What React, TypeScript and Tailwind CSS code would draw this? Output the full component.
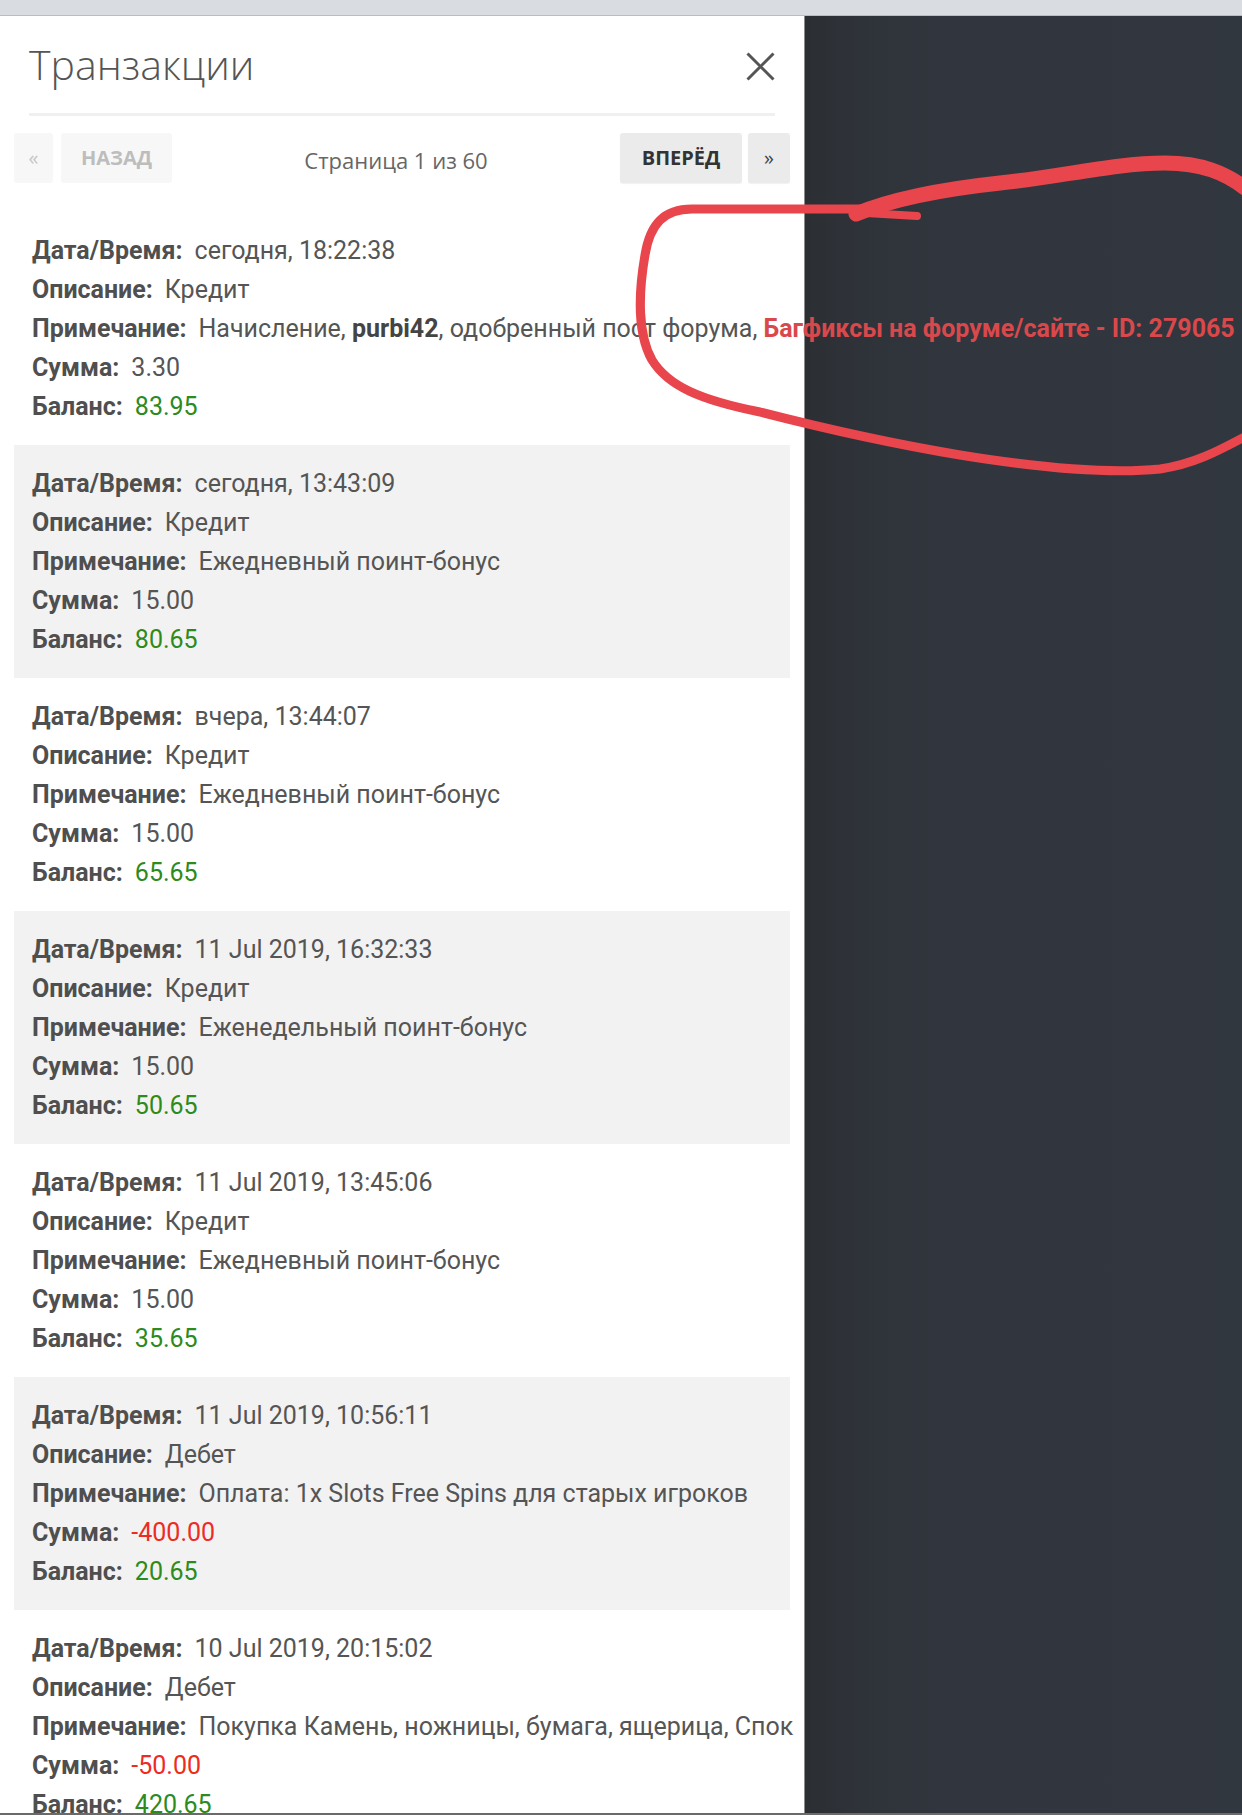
import React from "react";

type Tx = {
  date: string;
  desc: string;
  note: React.ReactNode;
  amount: string;
  balance: string;
};

const TXS: Tx[] = [
  {
    date: "сегодня, 18:22:38",
    desc: "Кредит",
    note: (
      <>
        Начисление, <b className="font-bold text-[#444]">purbi42</b>, одобренный пост форума,{" "}
        <b className="font-bold text-[#d9484b]">Багфиксы на форуме/сайте - ID: 279065</b>
      </>
    ),
    amount: "3.30",
    balance: "83.95",
  },
  { date: "сегодня, 13:43:09", desc: "Кредит", note: "Ежедневный поинт-бонус", amount: "15.00", balance: "80.65" },
  { date: "вчера, 13:44:07", desc: "Кредит", note: "Ежедневный поинт-бонус", amount: "15.00", balance: "65.65" },
  { date: "11 Jul 2019, 16:32:33", desc: "Кредит", note: "Еженедельный поинт-бонус", amount: "15.00", balance: "50.65" },
  { date: "11 Jul 2019, 13:45:06", desc: "Кредит", note: "Ежедневный поинт-бонус", amount: "15.00", balance: "35.65" },
  {
    date: "11 Jul 2019, 10:56:11",
    desc: "Дебет",
    note: "Оплата: 1x Slots Free Spins для старых игроков",
    amount: "-400.00",
    balance: "20.65",
  },
  {
    date: "10 Jul 2019, 20:15:02",
    desc: "Дебет",
    note: "Покупка Камень, ножницы, бумага, ящерица, Спок",
    amount: "-50.00",
    balance: "420.65",
  },
];

function Row({ label, children }: { label: string; children: React.ReactNode }) {
  return (
    <div className="whitespace-nowrap leading-[39px]">
      <span className="mr-[12px] font-bold text-[#4f4f4f]">{label}</span>
      {children}
    </div>
  );
}

export default function App() {
  return (
    <div className="relative flex h-[1815px] w-[1242px] flex-col overflow-hidden border-b-2 border-[#6a6a6a] bg-[#31363e] font-['Open_Sans','Liberation_Sans',sans-serif] text-[#555]">
      {/* top bar */}
      <div className="h-4 shrink-0 border-b border-[#b9bcc0] bg-[#d9dce1]" />

      <div className="flex min-h-0 flex-1">
        {/* side panel */}
        <aside className="relative z-10 w-[805px] shrink-0 border-r border-[#8c8c8c] bg-white px-[14px]">
          <div className="px-[15px]">
            <div className="flex items-center justify-between pt-[20px]">
              <h1 className="text-[41px] font-light leading-[56px] text-[#555]">Транзакции</h1>
              <svg width="29" height="29" viewBox="0 0 29 29" className="mt-1">
                <path d="M1.5 1.5 L27.5 27.5 M27.5 1.5 L1.5 27.5" stroke="#555" strokeWidth="3" />
              </svg>
            </div>
            <div className="mt-[21px] h-[3px] bg-[#f0f0f0]" />
          </div>

          {/* pager */}
          <div className="mt-[17px] flex h-[50px] items-stretch">
            <div className="flex w-[39px] items-center justify-center rounded-[3px] bg-[#f7f7f7] text-[20px] text-[#c6c6c6]">
              «
            </div>
            <div className="ml-2 flex w-[111px] items-center justify-center rounded-[3px] bg-[#f7f7f7] text-[20px] font-bold text-[#bdbdbd]">
              НАЗАД
            </div>
            <div className="flex flex-1 items-center justify-center pt-1 text-[22px] text-[#666]">Страница 1 из 60</div>
            <div className="flex w-[122px] items-center justify-center rounded-[3px] bg-[#ebebeb] text-[20px] font-bold text-[#333] shadow-[0_1px_1px_rgba(0,0,0,0.06)]">
              ВПЕРЁД
            </div>
            <div className="ml-[6px] flex w-[42px] items-center justify-center rounded-[3px] bg-[#ebebeb] text-[20px] text-[#444] shadow-[0_1px_1px_rgba(0,0,0,0.06)]">
              »
            </div>
          </div>

          {/* transactions */}
          <div className="mt-[29px] flex flex-col font-['Roboto','Liberation_Sans',sans-serif] text-[25px]">
            {TXS.map((tx, i) => (
              <div key={i} className={`px-[18px] py-[19px] ${i % 2 === 1 ? "bg-[#f2f2f2]" : ""}`}>
                <Row label="Дата/Время:">{tx.date}</Row>
                <Row label="Описание:">{tx.desc}</Row>
                <Row label="Примечание:">{tx.note}</Row>
                <Row label="Сумма:">
                  <span className={tx.amount.startsWith("-") ? "text-[#ee2a24]" : ""}>{tx.amount}</span>
                </Row>
                <Row label="Баланс:">
                  <span className="text-[#2d8a1c]">{tx.balance}</span>
                </Row>
              </div>
            ))}
          </div>
        </aside>

        {/* dimmed backdrop */}
        <div className="flex-1 bg-[linear-gradient(to_right,#2b2e32,#2e3238_40px,#31363e_140px,#31373f)]" />
      </div>

      {/* hand-drawn annotation */}
      <svg
        className="pointer-events-none absolute inset-0 z-20"
        width="1242"
        height="1815"
        viewBox="0 0 1242 1815"
        fill="none"
      >
        <path
          d="M 862 209 L 692 209 C 664 209 650 224 645 255 C 638 295 638 335 652 360 C 668 386 700 400 760 412 C 830 430 900 445 960 455 C 1040 468 1110 474 1160 469 C 1195 464 1220 450 1250 434"
          stroke="#e8464c"
          strokeWidth="9"
          strokeLinecap="round"
          strokeLinejoin="round"
        />
        <path
          d="M 856 214 C 885 202 935 190 1000 183 C 1060 177 1115 163 1165 163 C 1200 163 1226 172 1250 192"
          stroke="#e8464c"
          strokeWidth="15"
          strokeLinecap="round"
        />
        <path d="M 866 213 L 917 216" stroke="#e8464c" strokeWidth="8" strokeLinecap="round" />
      </svg>
    </div>
  );
}
